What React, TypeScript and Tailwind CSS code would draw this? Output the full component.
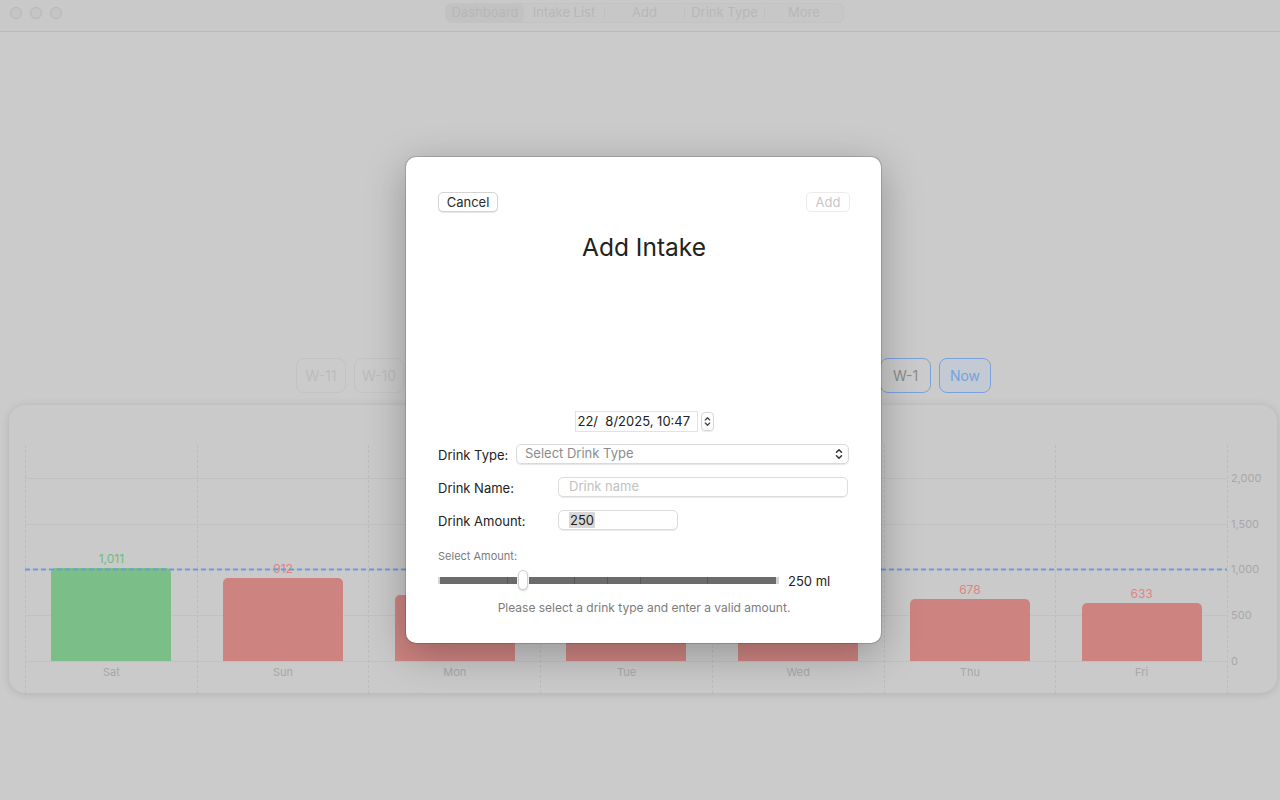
import React from 'react'

const font = { fontFamily: 'Inter, "Noto Sans", sans-serif' }

const days = [
  { day: 'Sat', value: 1011 },
  { day: 'Sun', value: 912 },
  { day: 'Mon', value: 722 },
  { day: 'Tue', value: 560 },
  { day: 'Wed', value: 600 },
  { day: 'Thu', value: 678 },
  { day: 'Fri', value: 633 },
]

const goal = 1000
const plotHeight = 216
const maxValue = 2360
const toPx = (v: number) => (v / maxValue) * plotHeight
const ticks = [2000, 1500, 1000, 500, 0]

const weeks = ['W-11', 'W-10', 'W-9', 'W-8', 'W-7', 'W-6', 'W-5', 'W-4', 'W-3', 'W-2']

function UpDown({ className = '' }: { className?: string }) {
  return (
    <svg viewBox="0 0 8 12" className={className} fill="none" stroke="currentColor" strokeWidth={1.5} strokeLinecap="round" strokeLinejoin="round">
      <path d="M1.5 4.2 4 1.7 6.5 4.2" />
      <path d="M1.5 7.8 4 10.3 6.5 7.8" />
    </svg>
  )
}

function TitleBar() {
  const tabs = [
    { label: 'Dashboard', w: 'w-[78px]', active: true },
    { label: 'Intake List', w: 'w-[80px]' },
    { label: 'Add', w: 'w-[80px]' },
    { label: 'Drink Type', w: 'w-[80px]' },
    { label: 'More', w: 'w-[79px]' },
  ]
  return (
    <div className="h-[32px] border-b border-[#b9b9b9] bg-[#c9c9c9] flex items-start">
      <div className="flex gap-[8px] pl-[10px] mt-[7px]">
        <div className="w-3 h-3 rounded-full bg-[#c5c5c5] border border-[#b6b6b6]" />
        <div className="w-3 h-3 rounded-full bg-[#c5c5c5] border border-[#b6b6b6]" />
        <div className="w-3 h-3 rounded-full bg-[#c5c5c5] border border-[#b6b6b6]" />
      </div>
      <div className="ml-[383px] mt-[3px] h-[20px] flex items-center rounded-[6px] bg-[#c7c7c7] border border-[#c3c3c3]">
        {tabs.map((t, i) => (
          <div key={t.label} className={`${t.w} h-full flex items-center`}>
            {i > 1 && <div className="w-px h-[12px] bg-[#c0c0c0]" />}
            <div className={`flex-1 h-full flex items-center justify-center text-[13px] text-[#b7b7b7] rounded-[5px] ${t.active ? 'bg-[#c2c2c2]' : ''}`}>
              {t.label}
            </div>
          </div>
        ))}
      </div>
    </div>
  )
}

function WeekRow() {
  return (
    <div className="flex justify-center gap-2 pl-[1px]">
      {weeks.map((w, i) => (
        <div
          key={w}
          className={`${i < 2 ? 'w-[50px]' : 'w-[50.5px]'} h-[35px] rounded-[8px] border border-[#c3c3c3] flex items-center justify-center text-[14px] text-[#bcbcbc]`}
        >
          {w}
        </div>
      ))}
      <div className="w-[51px] h-[35px] rounded-[8px] border-[1.5px] border-[#7ba2dc] flex items-center justify-center text-[14px] text-[#8b8b8b]">
        W-1
      </div>
      <div className="w-[52px] h-[35px] rounded-[8px] border-[1.5px] border-[#7ba2dc] bg-[#c4cad3] flex items-center justify-center text-[14px] text-[#76a0dc]">
        Now
      </div>
    </div>
  )
}

function Chart() {
  return (
    <div className="mt-[12px] h-[288px] rounded-[16px] bg-[#cacaca] shadow-[0_1px_8px_rgba(0,0,0,0.13)] pt-[40px] pl-[16px] flex">
      <div className="relative w-[1203px] grid grid-cols-7 border-r border-dashed border-[#bdbdbd]">
        <div className="absolute left-0 right-0 top-0 h-[216px]">
          {ticks.map(t => (
            <div key={t} className="absolute left-0 right-0 h-px bg-[#c1c1c1]" style={{ top: plotHeight - toPx(t) }} />
          ))}
        </div>
        {days.map(d => {
          const ok = d.value >= goal
          return (
            <div key={d.day} className="relative flex flex-col border-l border-dashed border-[#bdbdbd]">
              <div className="h-[216px] flex flex-col justify-end items-center">
                <div className={`text-[12px] leading-[15px] mb-[2px] ${ok ? 'text-[#6dbd7b]' : 'text-[#df837f]'}`}>
                  {d.value.toLocaleString('en-US')}
                </div>
                <div
                  className={`w-[120px] rounded-t-[5px] ${ok ? 'bg-[#7bbe88]' : 'bg-[#cd8481]'}`}
                  style={{ height: toPx(d.value) }}
                />
              </div>
              <div className="h-[20px] pt-[4px] text-center text-[11px] leading-[14px] text-[#a7a7a7]">{d.day}</div>
            </div>
          )
        })}
        <svg className="absolute left-0 top-0 w-full h-[216px] pointer-events-none">
          <line x1="0" x2="100%" y1={plotHeight - toPx(goal)} y2={plotHeight - toPx(goal)} stroke="#6b99e0" strokeWidth={2} strokeDasharray="5 3" />
        </svg>
      </div>
      <div className="relative w-[46px] h-[216px]">
        {ticks.map(t => (
          <div
            key={t}
            className="absolute left-[3px] text-[11px] leading-[14px] text-[#a8a8a8]"
            style={{ top: plotHeight - toPx(t) - 7 }}
          >
            {t.toLocaleString('en-US')}
          </div>
        ))}
      </div>
    </div>
  )
}

function AddIntakeModal() {
  return (
    <div className="absolute left-[406px] top-[157px] w-[475px] h-[486px] bg-white rounded-[10px] shadow-[0_0_0_1px_rgba(0,0,0,0.15),0_10px_40px_rgba(0,0,0,0.28)] pt-[35px] pl-[32px] pr-[31px] flex flex-col text-[#222]">
      <div className="flex justify-between">
        <button className="w-[60px] h-[20px] rounded-[5px] bg-white border border-[#d4d4d4] shadow-[0_1px_1px_rgba(0,0,0,0.1)] text-[13px] leading-none text-[#2a2a2a]">
          Cancel
        </button>
        <button className="w-[44px] h-[20px] rounded-[5px] bg-white border border-[#ececec] text-[13px] leading-none text-[#c6c6c6]">
          Add
        </button>
      </div>

      <h1 className="mt-[19px] text-center text-[24.5px] leading-[32px] text-[#222]">Add Intake</h1>

      <div className="mt-[148px] flex justify-center items-center gap-[3px]">
        <div className="w-[123px] h-[21px] border border-[#e2e2e2] px-[2px] flex items-center text-[13px] whitespace-pre">
          22/  8/2025, 10:47
        </div>
        <div className="w-[13px] h-[19px] rounded-[4px] border border-[#d6d6d6] shadow-[0_1px_1px_rgba(0,0,0,0.08)] flex items-center justify-center text-[#444]">
          <UpDown className="w-[7px] h-[13px]" />
        </div>
      </div>

      <div className="mt-[12px] flex items-center h-[20px]">
        <div className="w-[78px] h-[20px] pt-px text-[13px] leading-[20px]">Drink Type:</div>
        <div className="flex-1 mr-[1px] h-[20px] rounded-[5px] border border-[#dadada] shadow-[0_1px_1px_rgba(0,0,0,0.1)] pl-[8px] pr-[5px] flex items-center justify-between">
          <span className="text-[13px] text-[#8c8c8c]">Select Drink Type</span>
          <UpDown className="w-[8px] h-[12px] text-[#333]" />
        </div>
      </div>

      <div className="mt-[13px] flex items-center h-[20px]">
        <div className="w-[120px] h-[20px] pt-px text-[13px] leading-[20px]">Drink Name:</div>
        <div className="flex-1 mr-[2px] h-[20px] rounded-[5px] border border-[#dcdcdc] shadow-[0_1px_0_rgba(0,0,0,0.08)] px-[10px] flex items-center text-[13px] text-[#c2c2c2]">
          Drink name
        </div>
      </div>

      <div className="mt-[13px] flex items-center h-[20px]">
        <div className="w-[120px] h-[20px] pt-px text-[13px] leading-[20px]">Drink Amount:</div>
        <div className="w-[120px] h-[20px] rounded-[5px] border border-[#dcdcdc] shadow-[0_1px_0_rgba(0,0,0,0.08)] px-[10px] flex items-center">
          <span className="bg-[#d8d8d8] text-[13px] leading-[16px] px-px">250</span>
        </div>
      </div>

      <div className="mt-[19px] text-[11px] leading-[14px] text-[#7a7a7a]">Select Amount:</div>

      <div className="mt-[7px] flex items-center h-[20px]">
        <div className="relative w-[341px] h-[20px] flex items-center">
          <div className="w-full h-[7px] flex">
            <div className="w-[2px] bg-[#d4d4d4]" />
            <div className="flex-1 bg-[#6b6b6b] relative">
              <div className="absolute top-0 bottom-0 left-[67px] w-px bg-[#575757]" />
              <div className="absolute top-0 bottom-0 left-[134px] w-px bg-[#575757]" />
              <div className="absolute top-0 bottom-0 left-[167px] w-px bg-[#575757]" />
              <div className="absolute top-0 bottom-0 left-[200px] w-px bg-[#575757]" />
              <div className="absolute top-0 bottom-0 left-[267px] w-px bg-[#575757]" />
            </div>
            <div className="w-[3px] bg-[#d4d4d4]" />
          </div>
          <div className="absolute left-[79px] top-0 w-[12px] h-[20px] bg-white" />
          <div className="absolute left-[80px] top-0 w-[10px] h-[20px] rounded-full bg-white border border-[#cfcfcf] shadow-[0_1px_2px_rgba(0,0,0,0.2)]" />
        </div>
        <div className="ml-[9px] h-[20px] pt-px text-[13px] leading-[20px]">250 ml</div>
      </div>

      <div className="mt-[11px] text-center text-[12px] leading-[14px] text-[#7c7c7c]">
        Please select a drink type and enter a valid amount.
      </div>
    </div>
  )
}

export default function App() {
  return (
    <div className="relative w-[1280px] h-[800px] overflow-hidden bg-[#cbcbcb]" style={font}>
      <TitleBar />
      <div className="pt-[326px] pl-[9px] pr-[3px]">
        <WeekRow />
        <Chart />
      </div>
      <AddIntakeModal />
    </div>
  )
}
